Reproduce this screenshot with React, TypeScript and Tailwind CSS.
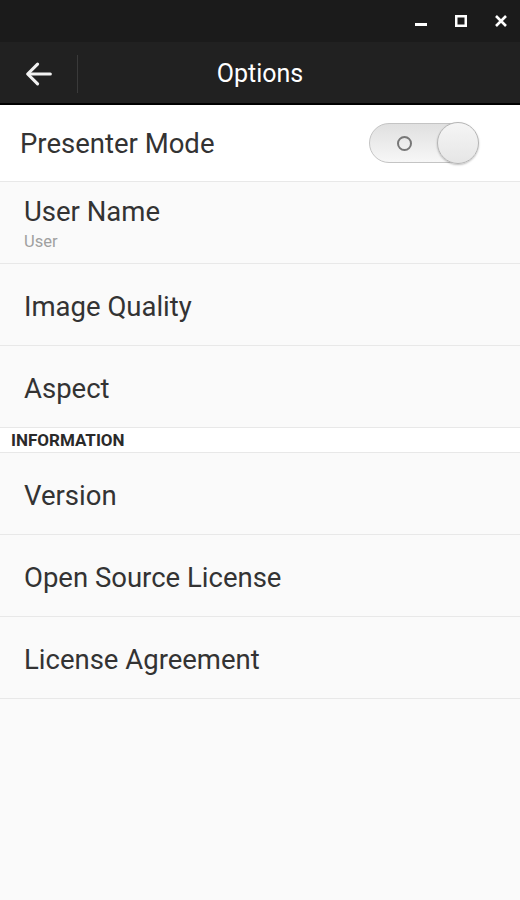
import React from "react";

function Row({ title, sub }: { title: string; sub?: string }) {
  return (
    <div className={`h-[82px] flex flex-col justify-center pl-[24px] border-b border-[#e8e8e8] bg-[#fafafa] ${sub ? "pt-[2px]" : "pt-[5px]"}`}>
      <div className="text-[27.5px] leading-[32px] text-[#333333]">{title}</div>
      {sub && <div className="text-[16.5px] leading-[19px] text-[#a0a0a0] mt-[4px]">{sub}</div>}
    </div>
  );
}

export default function App() {
  return (
    <div className="w-[520px] h-[900px] bg-[#fafafa] flex flex-col" style={{ fontFamily: "Roboto, 'Noto Sans', sans-serif" }}>
      <div className="h-[42px] bg-[#1b1b1b] flex items-center justify-end pr-[12px] gap-[26px]">
        <svg width="14" height="14" viewBox="0 0 14 14"><rect x="1" y="9" width="12" height="3" fill="#fff" /></svg>
        <svg width="14" height="14" viewBox="0 0 14 14"><rect x="2.25" y="2.25" width="9.5" height="9.5" fill="none" stroke="#fff" strokeWidth="2.5" /></svg>
        <svg width="14" height="14" viewBox="0 0 14 14"><path d="M2 2 L12 12 M12 2 L2 12" stroke="#fff" strokeWidth="2.6" /></svg>
      </div>
      <div className="h-[63px] bg-[#212121] flex items-center relative border-b-2 border-black">
        <div className="w-[77px] h-full flex items-center justify-center pt-[2px]">
          <svg width="34" height="34" viewBox="0 0 24 24" fill="none" stroke="#f2f2f2" strokeWidth="2.2" strokeLinecap="round" strokeLinejoin="round">
            <path d="M20 12H5" />
            <path d="M11 5l-7 7 7 7" />
          </svg>
        </div>
        <div className="w-px h-[38px] bg-[#3a3a3a] mt-[2px]" />
        <div className="absolute left-0 right-0 text-center text-[25px] pt-[3px] text-white pointer-events-none">Options</div>
      </div>
      <div className="h-[77px] bg-white flex items-center justify-between pl-[20px] pr-[41px] border-b border-[#e8e8e8]">
        <div className="text-[27.5px] text-[#333333] pt-[2px]">Presenter Mode</div>
        <div className="relative w-[110px] h-[42px]">
          <div className="absolute left-0 top-[1px] w-[108px] h-[40px] rounded-full bg-gradient-to-b from-[#e0e0e0] to-[#f7f7f7] border border-[#c4c4c4] flex items-center pl-[27px]">
            <div className="w-[15px] h-[15px] rounded-full border-2 border-[#777]" />
          </div>
          <div className="absolute right-0 top-0 w-[42px] h-[42px] rounded-full bg-gradient-to-b from-[#f5f5f5] to-[#e6e6e6] border border-[#b5b5b5] shadow-[0_1px_2px_rgba(0,0,0,0.25)]" />
        </div>
      </div>
      <Row title="User Name" sub="User" />
      <Row title="Image Quality" />
      <Row title="Aspect" />
      <div className="h-[25px] bg-white flex items-center pl-[11px] pt-[2px] border-b border-[#e8e8e8] text-[17px] font-bold text-[#2a2a2a]">INFORMATION</div>
      <Row title="Version" />
      <Row title="Open Source License" />
      <Row title="License Agreement" />
    </div>
  );
}
